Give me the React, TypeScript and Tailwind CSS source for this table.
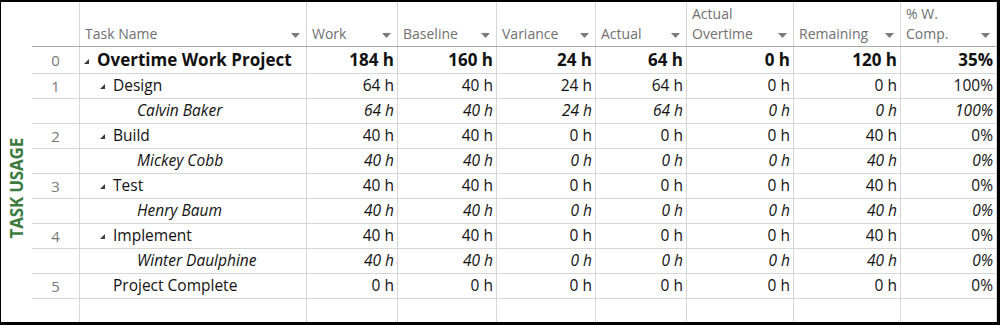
import React from 'react';

type Row = {
  id?: string;
  name: string;
  kind: 'project' | 'summary' | 'assignment' | 'task';
  values: string[];
};

const rows: Row[] = [
  { id: '0', name: 'Overtime Work Project', kind: 'project', values: ['184 h', '160 h', '24 h', '64 h', '0 h', '120 h', '35%'] },
  { id: '1', name: 'Design', kind: 'summary', values: ['64 h', '40 h', '24 h', '64 h', '0 h', '0 h', '100%'] },
  { name: 'Calvin Baker', kind: 'assignment', values: ['64 h', '40 h', '24 h', '64 h', '0 h', '0 h', '100%'] },
  { id: '2', name: 'Build', kind: 'summary', values: ['40 h', '40 h', '0 h', '0 h', '0 h', '40 h', '0%'] },
  { name: 'Mickey Cobb', kind: 'assignment', values: ['40 h', '40 h', '0 h', '0 h', '0 h', '40 h', '0%'] },
  { id: '3', name: 'Test', kind: 'summary', values: ['40 h', '40 h', '0 h', '0 h', '0 h', '40 h', '0%'] },
  { name: 'Henry Baum', kind: 'assignment', values: ['40 h', '40 h', '0 h', '0 h', '0 h', '40 h', '0%'] },
  { id: '4', name: 'Implement', kind: 'summary', values: ['40 h', '40 h', '0 h', '0 h', '0 h', '40 h', '0%'] },
  { name: 'Winter Daulphine', kind: 'assignment', values: ['40 h', '40 h', '0 h', '0 h', '0 h', '40 h', '0%'] },
  { id: '5', name: 'Project Complete', kind: 'task', values: ['0 h', '0 h', '0 h', '0 h', '0 h', '0 h', '0%'] },
];

const headers: string[][] = [
  ['Task Name'],
  ['Work'],
  ['Baseline'],
  ['Variance'],
  ['Actual'],
  ['Actual', 'Overtime'],
  ['Remaining'],
  ['% W.', 'Comp.'],
];

const gridCols = 'grid grid-cols-[48px_227px_91px_99px_99px_91px_107px_107px_96px]';
const cell = 'border-r border-[#d6d6d6]';

function Collapse() {
  return (
    <svg width="5" height="5" viewBox="0 0 5 5" className="shrink-0">
      <polygon points="5,0 5,5 0,5" fill="#3a3a3a" />
    </svg>
  );
}

function DropArrow() {
  return (
    <svg width="9" height="5" viewBox="0 0 9 5" className="shrink-0 mb-[8px]">
      <polygon points="0,0 9,0 4.5,5" fill="#7a7a7a" />
    </svg>
  );
}

function HeaderRow() {
  return (
    <div className={`${gridCols} h-[45px] border-b border-[#ababab]`}>
      <div className={cell} />
      {headers.map((lines, i) => (
        <div key={i} className={`${cell} flex items-end justify-between pl-[5px] pr-[6px]`}>
          <div className="pb-[2px] leading-[20px] text-[14px] text-[#707070]">
            {lines.map((l) => (
              <div key={l}>{l}</div>
            ))}
          </div>
          <DropArrow />
        </div>
      ))}
    </div>
  );
}

function DataRow({ row }: { row: Row }) {
  const isProject = row.kind === 'project';
  const italic = row.kind === 'assignment';
  const text = isProject ? 'text-[17px] font-bold' : 'text-[15.5px]';
  const pad =
    row.kind === 'project' ? 'pl-[4px]' : row.kind === 'assignment' ? 'pl-[57px]' : 'pl-[20px]';

  return (
    <div className={`${gridCols} ${isProject ? 'h-[27px]' : 'h-[25px]'} border-b border-[#d6d6d6]`}>
      <div className={`${cell} flex items-center justify-center text-[15px] text-[#787878]`}>{row.id}</div>
      <div className={`${cell} flex items-center ${pad} ${text} ${italic ? 'italic' : ''} text-[#111]`}>
        {(row.kind === 'project' || row.kind === 'summary') && (
          <span className={`w-[13px] flex ${isProject ? 'mt-[2px]' : ''}`}>
            <Collapse />
          </span>
        )}
        {row.kind === 'task' && <span className="w-[13px]" />}
        <span className="whitespace-nowrap">{row.name}</span>
      </div>
      {row.values.map((v, i) => (
        <div
          key={i}
          className={`${cell} flex items-center justify-end pr-[3px] ${text} ${italic ? 'italic' : ''} text-[#111]`}
        >
          {v}
        </div>
      ))}
    </div>
  );
}

export default function App() {
  return (
    <div
      className="w-[1000px] h-[325px] bg-white border-t-2 border-l border-r-[3px] border-b-[3px] border-black flex overflow-hidden"
      style={{ fontFamily: '"Open Sans", "Noto Sans", sans-serif' }}
    >
      <div className="w-[31px] shrink-0 flex flex-col items-center justify-end pb-[84px]">
        <span className="[writing-mode:vertical-rl] rotate-180 text-[17px] font-bold text-[#3b7b3d] leading-none tracking-[-0.2px] whitespace-nowrap">
          TASK USAGE
        </span>
      </div>
      <div className="flex-1 flex flex-col">
        <HeaderRow />
        {rows.map((r, i) => (
          <DataRow key={i} row={r} />
        ))}
        <div className={`${gridCols} flex-1`}>
          {Array.from({ length: 9 }).map((_, i) => (
            <div key={i} className={cell} />
          ))}
        </div>
      </div>
    </div>
  );
}
